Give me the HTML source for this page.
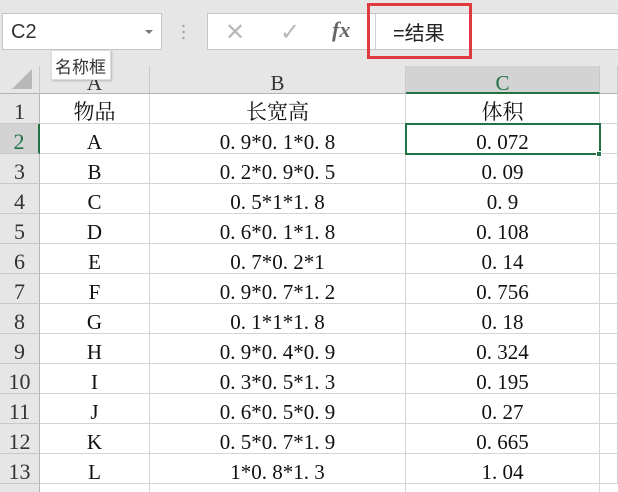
<!DOCTYPE html>
<html><head><meta charset="utf-8"><style>
*{margin:0;padding:0;box-sizing:border-box}
html,body{width:618px;height:492px;overflow:hidden;}
body{background:#fff;position:relative;font-family:"Liberation Serif","Noto Serif CJK SC",serif;}
.top{position:absolute;left:0;top:0;width:618px;height:66px;background:#e6e6e6;}
.nb{position:absolute;left:2px;top:13px;width:160px;height:37px;background:#fff;border:1px solid #c6c6c6;font-family:"Liberation Sans",sans-serif;font-size:20px;color:#333;padding:7px 0 0 8px;}
.nb .arr{position:absolute;right:8px;top:16px;width:0;height:0;border-left:4px solid transparent;border-right:4px solid transparent;border-top:4px solid #777;}
.dots{position:absolute;left:182px;top:23px;width:3px;height:18px;background:radial-gradient(circle,#aaa 1.2px,transparent 1.5px) 0 0/3px 6px;}
.fb{position:absolute;left:207px;top:13px;width:411px;height:37px;background:#fff;border:1px solid #c6c6c6;border-right:none;}
.fb .sep{position:absolute;left:167px;top:0;width:1px;height:35px;background:#d0d0d0;}
.ic{position:absolute;top:4px;font-size:24px;color:#b8b8b8;font-family:"DejaVu Sans",sans-serif;}
.fx{position:absolute;left:124px;top:3px;font-size:22px;color:#666;font-style:italic;font-weight:bold;font-family:"Liberation Serif",serif;}
.ft{position:absolute;left:185px;top:3px;font-family:"Liberation Sans","Noto Sans CJK SC",sans-serif;font-size:20px;color:#222;}
.red{position:absolute;left:367px;top:3px;width:105px;height:56px;border:3px solid #e03a3e;}
.tip{position:absolute;left:51px;top:50px;width:60px;height:30px;background:#fff;border:1px solid #ddd;font-family:"Liberation Sans","Noto Sans CJK SC",sans-serif;font-size:17px;color:#333;padding:2px 0 0 3px;z-index:5;box-shadow:1px 1px 2px rgba(0,0,0,.2);}
.hdr{position:absolute;top:66px;height:28px;background:#e6e6e6;border-right:1px solid #c8c8c8;border-bottom:1px solid #b5b5b5;text-align:center;font-size:21px;color:#333;line-height:34px;overflow:hidden;}
.corner{position:absolute;left:0;top:66px;width:40px;height:28px;background:#e6e6e6;border-right:1px solid #c8c8c8;border-bottom:1px solid #b5b5b5;}
.corner:after{content:"";position:absolute;right:7px;bottom:4px;width:0;height:0;border-left:20px solid transparent;border-bottom:20px solid #b8b8b8;}
.rh{position:absolute;left:0;width:40px;height:30px;background:#e6e6e6;border-bottom:1px solid #c8c8c8;border-right:1px solid #b5b5b5;text-align:center;font-size:22px;color:#333;line-height:36px;}
.c{position:absolute;height:30px;border-bottom:1px solid #d4d4d4;border-right:1px solid #d4d4d4;text-align:center;font-size:21px;color:#111;line-height:36px;white-space:nowrap;}
.sel{position:absolute;left:405px;top:123px;width:196px;height:32px;border:2px solid #217346;}
.h2{position:absolute;left:596px;top:151px;width:6px;height:6px;background:#217346;border:1px solid #fff;}
</style></head><body>
<div class="top"></div>
<div class="nb">C2<div class="arr"></div></div>
<div class="dots"></div>
<div class="fb"><span class="ic" style="left:17px">✕</span><span class="ic" style="left:72px">✓</span><span class="fx">fx</span><div class="sep"></div><span class="ft">=结果</span></div>
<div class="red"></div>
<div class="tip">名称框</div>
<div class="corner"></div>
<div class="hdr" style="left:40px;width:110px">A</div>
<div class="hdr" style="left:150px;width:256px">B</div>
<div class="hdr" style="left:406px;width:194px;background:#d3d3d3;border-bottom:2px solid #217346;color:#217346">C</div>
<div class="hdr" style="left:600px;width:18px"></div>
<div id="g"></div>
<script>
var d=[["物品","长宽高","体积"],["A","0. 9*0. 1*0. 8","0. 072"],["B","0. 2*0. 9*0. 5","0. 09"],["C","0. 5*1*1. 8","0. 9"],["D","0. 6*0. 1*1. 8","0. 108"],["E","0. 7*0. 2*1","0. 14"],["F","0. 9*0. 7*1. 2","0. 756"],["G","0. 1*1*1. 8","0. 18"],["H","0. 9*0. 4*0. 9","0. 324"],["I","0. 3*0. 5*1. 3","0. 195"],["J","0. 6*0. 5*0. 9","0. 27"],["K","0. 5*0. 7*1. 9","0. 665"],["L","1*0. 8*1. 3","1. 04"]];
var h="";
for(var i=0;i<d.length;i++){var t=94+i*30;
var rs=i==1?'background:#d3d3d3;color:#217346;border-right:2px solid #217346;':'';
h+='<div class="rh" style="top:'+t+'px;'+rs+'">'+(i+1)+'</div>';
h+='<div class="c" style="top:'+t+'px;left:40px;width:110px">'+d[i][0]+'</div>';
h+='<div class="c" style="top:'+t+'px;left:150px;width:256px">'+d[i][1]+'</div>';
h+='<div class="c" style="top:'+t+'px;left:406px;width:194px">'+d[i][2]+'</div>';
h+='<div class="c" style="top:'+t+'px;left:600px;width:18px"></div>';}
h+='<div class="rh" style="top:484px;height:8px;border-bottom:none"></div>';
h+='<div class="c" style="top:484px;height:8px;left:40px;width:110px;border-bottom:none"></div>';
h+='<div class="c" style="top:484px;height:8px;left:150px;width:256px;border-bottom:none"></div>';
h+='<div class="c" style="top:484px;height:8px;left:406px;width:194px;border-bottom:none"></div>';
document.getElementById('g').innerHTML=h;
</script>
<div class="sel"></div><div class="h2"></div>
</body></html>
